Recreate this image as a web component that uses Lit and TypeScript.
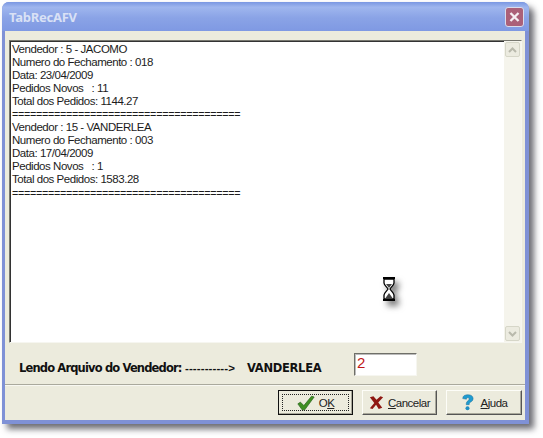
import { LitElement, html, css, svg } from "lit";
import { customElement } from "lit/decorators.js";

const SEP = "======================================";
const lines = [
  "Vendedor : 5 - JACOMO",
  "Numero do Fechamento : 018",
  "Data: 23/04/2009",
  "Pedidos Novos   : 11",
  "Total dos Pedidos: 1144.27",
  SEP,
  "Vendedor : 15 - VANDERLEA",
  "Numero do Fechamento : 003",
  "Data: 17/04/2009",
  "Pedidos Novos   : 1",
  "Total dos Pedidos: 1583.28",
  SEP,
];

@customElement("app-root")
export class AppRoot extends LitElement {
  static styles = css`
    :host { display: block; width: 543px; height: 438px; background: #fff; overflow: hidden; padding: 2px 0 0 2px; box-sizing: border-box; font-family: "Liberation Sans", Arial, sans-serif; color: #111; }
    .win { position: relative; width: 527px; height: 422px; box-sizing: border-box; display: flex; flex-direction: column; border-radius: 7px 7px 0 0; background: #7f91d6; padding: 0 4px 4px 3px; box-shadow: 5px 5px 6px rgba(60,60,70,.75); }
    .title { height: 29px; flex: none; margin: 0 -4px 0 -3px; padding: 0 5px 0 7px; display: flex; align-items: center; justify-content: space-between; border-radius: 7px 7px 0 0; background: linear-gradient(180deg, #7a97e2 0%, #9fb6ee 18%, #8aa3e6 55%, #7f99e3 100%); }
    .title span { font: bold 13px "Noto Sans", sans-serif; letter-spacing: -.25px; color: #d9e1f5; }
    .close { width: 19px; height: 20px; box-sizing: border-box; border: 1px solid #d9dcec; border-radius: 3px; background: #ab6078; display: block; }
    .client { flex: 1; background: #ecebdd; display: flex; flex-direction: column; min-height: 0; }
    .memo-wrap { flex: none; padding: 9px 3px 0 4px; }
    .memo { height: 303px; display: flex; box-sizing: border-box; border: 1px solid; border-color: #77776f #f6f6f0 #f6f6f0 #77776f; background: #fff; box-shadow: inset 1px 1px 0 #333; }
    .text { flex: 1; padding: 2px 0 0 2px; font: 11.5px/13.05px "Liberation Sans", sans-serif; white-space: pre; color: #1c1c1c; letter-spacing: -.46px; }
    .line { display: block; height: 13.05px; }
    .sep { font-size: 10.8px; letter-spacing: -.3px; }
    .sb { width: 17px; flex: none; background: #f5f4ec; display: flex; flex-direction: column; justify-content: space-between; align-items: center; padding: 1px 0; box-sizing: border-box; }
    .sb div { width: 15px; height: 15px; border: 1px solid #d6d6c8; border-radius: 2px; background: #ecebe0; display: flex; align-items: center; justify-content: center; box-sizing: border-box; }
    .status { flex: none; display: flex; align-items: center; height: 39px; padding: 2px 0 0 14px; font: bold 11.5px "DejaVu Sans", sans-serif; white-space: nowrap; border-bottom: 1px solid #aaa99d; box-shadow: 0 1px 0 #f8f8f2; color: #111; }
    .status span { margin-top: 6px; }
    .lbl { width: 166px; letter-spacing: -.85px; }
    .arrow { width: 62px; font-family: "Liberation Sans", sans-serif; letter-spacing: .1px; }
    .name { width: 107px; letter-spacing: -.3px; }
    .input { width: 63px; height: 23px; box-sizing: border-box; background: #fff; border: 1px solid; border-color: #6f6f68 #f6f6f0 #f6f6f0 #6f6f68; color: #c01818; font: 15px/17px "Liberation Sans", sans-serif; padding: 0 0 0 2px; box-shadow: inset 1px 1px 0 #bbb; }
    .bar { flex: 1; display: flex; justify-content: flex-end; align-items: flex-start; gap: 9px; padding: 5px 3px 0 0; }
    .btn { width: 75px; height: 25px; box-sizing: border-box; border: 1px solid; border-color: #fdfdf8 #555 #555 #fdfdf8; background: #ecebdd; display: flex; align-items: center; justify-content: center; gap: 4px; font: 11.5px "Liberation Sans", sans-serif; letter-spacing: -.5px; color: #222; box-shadow: inset -1px -1px 0 #a9a89b; }
    .btn.wide { width: 76px; gap: 7px; }
    .btn u { text-decoration: underline; }
    .btn.def { border: 1px solid #111; position: relative; gap: 4px; }
    .btn.def::after { content: ""; position: absolute; inset: 3px; border: 1px dotted #222; }
    .hour { position: absolute; left: 379px; top: 275px; filter: drop-shadow(4px 5px 3px rgba(70,70,70,.7)); display: block; }
  `;

  render() {
    return html`<div class="win">
      <div class="title">
        <span>TabRecAFV</span>
        <svg class="close" viewBox="0 0 19 20">
          <path d="M5 5.500l9 9M14 5.500l-9 9" stroke="#f4eef2" stroke-width="2.600" fill="none" />
        </svg>
      </div>
      <div class="client">
        <div class="memo-wrap">
          <div class="memo">
            <div class="text">${lines.map((l) => html`<span class="line ${l === SEP ? "sep" : ""}">${l}</span>`)}</div>
            <div class="sb">
              <div><svg width="9" height="6" viewBox="0 0 9 6"><path d="M1 5l3.500-3.500L8 5" stroke="#b9b9ac" stroke-width="2" fill="none" /></svg></div>
              <div><svg width="9" height="6" viewBox="0 0 9 6"><path d="M1 1l3.500 3.500L8 1" stroke="#b9b9ac" stroke-width="2" fill="none" /></svg></div>
            </div>
          </div>
        </div>
        <div class="status">
          <span class="lbl">Lendo Arquivo do Vendedor:</span>
          <span class="arrow">-----------&gt;</span>
          <span class="name">VANDERLEA</span>
          <div class="input">2</div>
        </div>
        <div class="bar">
          <div class="btn def">
            <svg width="18" height="16" viewBox="0 0 21 18"><path d="M1 10l3-2 4 4 9-11 3 1-11 15h-3z" fill="#3f8f22" stroke="#23601a" stroke-width=".8" /></svg>
            <span>O<u>K</u></span>
          </div>
          <div class="btn">
            <svg width="15" height="15" viewBox="0 0 17 16"><path d="M1 2l4-1 3.500 4L13 1l3 1-5.500 6L15 14l-4 1.500-3-5-4 5-3-1 5-6z" fill="#8f1712" /></svg>
            <span><u>C</u>ancelar</span>
          </div>
          <div class="btn wide">
            <svg width="13" height="19" viewBox="0 0 15 20"><path d="M2 5.500C2 2 5 1 8 1c3.500 0 6 1.500 6 4.500 0 2.500-2 3.500-3.500 4.500-1 .7-1 1.500-1 2.500H6c0-2 .5-3.500 2-4.500 1-.7 1.500-1.300 1.500-2.200 0-.8-.7-1.300-1.600-1.300-1 0-1.700.7-1.700 1.800z" fill="#1f9bd0" stroke="#16648f" stroke-width=".5" /><circle cx="7.500" cy="16.500" r="2.300" fill="#1f8fc4" /></svg>
            <span><u>A</u>juda</span>
          </div>
        </div>
      </div>
      <svg class="hour" width="16" height="24" viewBox="0 0 16 24">
        ${svg`<path d="M2 1h12M2 23h12" stroke="#000" stroke-width="2" />
        <path d="M3 2v4c0 2 3 4 4 6-1 2-4 4-4 6v4h10v-4c0-2-3-4-4-6 1-2 4-4 4-6V2z" fill="#fff" stroke="#000" stroke-width="1.300" />
        <path d="M5 7h6l-3 4zM4.500 21l3.500-5 3.500 5z" fill="#444" />`}
      </svg>
    </div>`;
  }
}
